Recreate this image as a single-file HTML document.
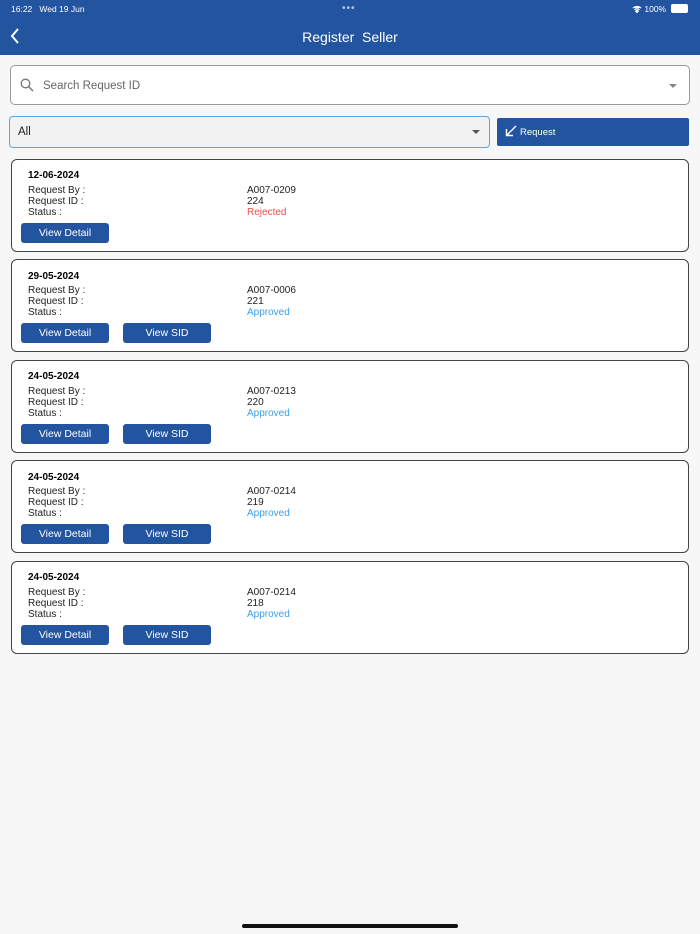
<!DOCTYPE html>
<html><head><style>
body{margin:0;width:700px;height:934px;background:#f7f7f7;font-family:"Liberation Sans",sans-serif;position:relative;overflow:hidden}
.a{position:absolute}
.hdr{left:0;top:0;width:700px;height:55px;background:#2354a0;color:#fff}
.card{left:11px;width:676px;height:91px;border:1.3px solid #444;border-radius:6px;background:#fff}
.t{font-size:10px;color:#222;line-height:11px}
.btn{background:#2354a0;color:#fff;font-size:10.5px;text-align:center;line-height:20px;height:20px;width:88px;border-radius:3px}
</style></head><body>
<div class="a hdr">
<div class="a" style="left:11px;top:4px;font-size:8.5px">16:22&nbsp;&nbsp; Wed 19 Jun</div>
<div class="a" style="left:342px;top:3px;font-size:10px;letter-spacing:1px;color:#b9c8e6">•••</div>
<div class="a" style="left:632px;top:4px;font-size:8.5px">
<svg width="10" height="8" viewBox="0 0 10 8" style="vertical-align:-1px"><path d="M1 3a6 6 0 0 1 8 0M2.5 4.6a4 4 0 0 1 5 0M5 7.5l1.3-1.4a2 2 0 0 0-2.6 0z" stroke="#fff" stroke-width="1.2" fill="#fff"/></svg> 100%</div>
<div class="a" style="left:671px;top:4px;width:15px;height:7px;border:1px solid #fff;border-radius:2px;background:#fff"></div>
<svg class="a" style="left:9px;top:28px" width="12" height="16" viewBox="0 0 12 16"><path d="M9 1L3 8l6 7" stroke="#fff" stroke-width="2" fill="none"/></svg>
<div class="a" style="left:0;width:700px;top:29px;text-align:center;font-size:14px">Register&nbsp; Seller</div>
</div>
<div class="a" style="left:10px;top:65px;width:678px;height:38px;border:1.3px solid #999;border-radius:5px;background:#fff"></div>
<svg class="a" style="left:20px;top:78px" width="14" height="14" viewBox="0 0 14 14"><circle cx="5.5" cy="5.5" r="4.3" stroke="#777" stroke-width="1.3" fill="none"/><path d="M8.7 8.7L13 13" stroke="#777" stroke-width="1.4"/></svg>
<div class="a" style="left:43px;top:80px;font-size:11.5px;color:#666">Search Request ID</div>
<div class="a" style="left:669px;top:84px;border-left:4px solid transparent;border-right:4px solid transparent;border-top:4px solid #888"></div>
<div class="a" style="left:9px;top:116px;width:479px;height:30px;border:1.5px solid #5aa8e8;border-radius:4px;background:#f2f2f2"></div>
<div class="a" style="left:18px;top:126px;font-size:11.5px;color:#222">All</div>
<div class="a" style="left:472px;top:130px;border-left:4px solid transparent;border-right:4px solid transparent;border-top:4px solid #555"></div>
<div class="a" style="left:497px;top:118px;width:192px;height:28px;background:#2354a0;border-radius:2px"></div>
<svg class="a" style="left:505px;top:125px" width="12" height="12" viewBox="0 0 12 12"><path d="M11 1L1.5 10.5M1.5 4v6.5H8" stroke="#fff" stroke-width="1.4" fill="none"/></svg>
<div class="a" style="left:520px;top:127px;font-size:9.5px;color:#fff">Request</div>

<div class="a card" style="top:159px"></div>
<div class="a card" style="top:259px"></div>
<div class="a card" style="top:360px"></div>
<div class="a card" style="top:460px"></div>
<div class="a card" style="top:561px"></div>

<div id="c"></div>
<script>
var d=[["12-06-2024","A007-0209","224","Rejected",0],["29-05-2024","A007-0006","221","Approved",1],["24-05-2024","A007-0213","220","Approved",1],["24-05-2024","A007-0214","219","Approved",1],["24-05-2024","A007-0214","218","Approved",1]];
var h="";
d.forEach(function(r,i){var y=159+i*100.5;
h+='<div class="a" style="left:28px;top:'+(y+11)+'px;font-size:10px;font-weight:bold">'+r[0]+'</div>';
h+='<div class="a t" style="left:28px;top:'+(y+25.5)+'px">Request By :<br>Request ID :<br>Status :</div>';
h+='<div class="a t" style="left:247px;top:'+(y+25.5)+'px">'+r[1]+'<br>'+r[2]+'<br><span style="color:'+(r[4]?'#3aa0ec':'#e8524a')+'">'+r[3]+'</span></div>';
h+='<div class="a btn" style="left:21px;top:'+(y+63.5)+'px">View Detail</div>';
if(r[4])h+='<div class="a btn" style="left:123px;top:'+(y+63.5)+'px">View SID</div>';});
document.getElementById("c").innerHTML=h;
</script>
<div class="a" style="left:242px;top:924px;width:216px;height:4px;border-radius:2px;background:#111"></div>
</body></html>
